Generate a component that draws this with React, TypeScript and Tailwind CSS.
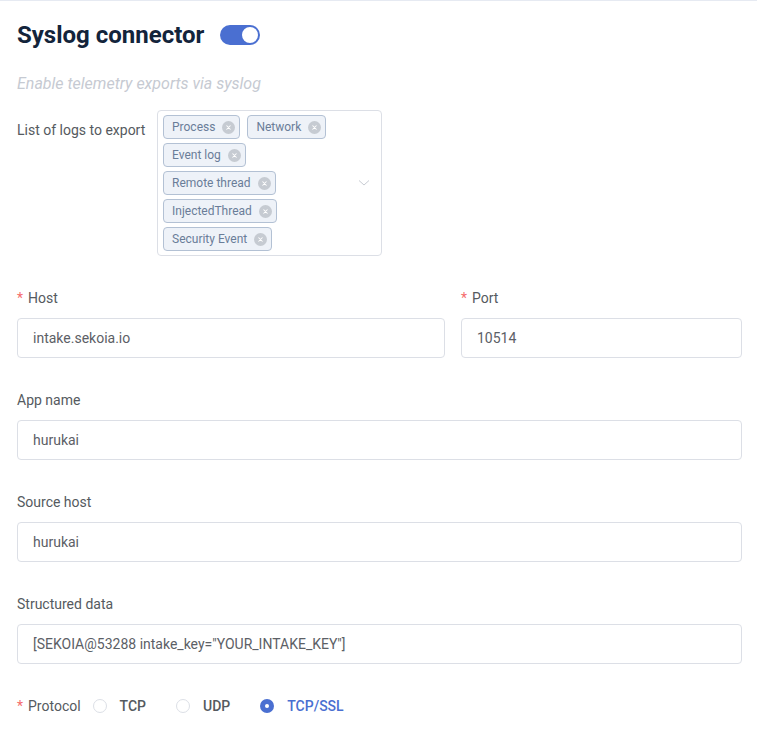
import type { ReactNode } from "react";

const TAG_ROWS = ["Process", "Network", "Event log", "Remote thread", "InjectedThread", "Security Event"];

function Required() {
  return <span className="text-[#f56c6c] mr-[5px]">*</span>;
}

function Label({ children, required }: { children: ReactNode; required?: boolean }) {
  return (
    <div className="text-[14px] leading-[20px] text-[#555a60]">
      {required && <Required />}
      {children}
    </div>
  );
}

function Input({ value }: { value: string }) {
  return (
    <div className="h-[40px] border border-[#dcdfe6] rounded-[4px] px-[15px] flex items-center text-[14px] text-[#5c6066]">
      {value}
    </div>
  );
}

function Tag({ text }: { text: string }) {
  return (
    <div className="h-[24px] pl-[8px] pr-[4px] flex items-center gap-[7px] bg-[#eef2f8] border border-[#b3c1d4] rounded-[4px] text-[12px] text-[#6a7d98]">
      <span>{text}</span>
      <span className="w-[13px] h-[13px] rounded-full bg-[#c6cbd2] flex items-center justify-center">
        <svg width="7" height="7" viewBox="0 0 8 8">
          <path d="M2 2 L6 6 M6 2 L2 6" stroke="#ffffff" strokeWidth="1.2" strokeLinecap="round" />
        </svg>
      </span>
    </div>
  );
}

function Radio({ label, checked }: { label: string; checked?: boolean }) {
  return (
    <div className="flex items-center gap-[13px]">
      {checked ? (
        <span className="w-[14px] h-[14px] rounded-full bg-[#4a6fd1] flex items-center justify-center">
          <span className="w-[4px] h-[4px] rounded-full bg-white" />
        </span>
      ) : (
        <span className="w-[14px] h-[14px] rounded-full border border-[#dcdfe6] bg-white" />
      )}
      <span className={`text-[14px] font-medium ${checked ? "text-[#4a6fd1]" : "text-[#555a60]"}`}>{label}</span>
    </div>
  );
}

export default function App() {
  return (
    <div className="min-h-screen bg-white border-t border-[#e6eaf2] font-['Roboto',sans-serif]">
      <div className="pl-[17px] pr-[15px] pt-[18px] pb-[20px]">
        {/* Header */}
        <div className="flex items-center gap-[16px] h-[32px]">
          <h1 className="text-[24px] font-bold text-[#13243b]">Syslog connector</h1>
          <div className="w-[40px] h-[20px] rounded-full bg-[#4a6fd1] flex items-center justify-end pr-[2px]">
            <span className="w-[16px] h-[16px] rounded-full bg-white" />
          </div>
        </div>

        <p className="mt-[21px] text-[16px] leading-[24px] italic text-[#c6cad2]">Enable telemetry exports via syslog</p>

        {/* Logs multiselect */}
        <div className="mt-[14px] flex items-start">
          <div className="w-[140px] pt-[10px]">
            <Label>List of logs to export</Label>
          </div>
          <div className="w-[225px] border border-[#dcdfe6] rounded-[4px] pl-[5px] py-[4px] flex items-center">
            <div className="w-[185px] flex flex-wrap gap-x-[7px] gap-y-[4px]">
              {TAG_ROWS.map((t) => (
                <Tag key={t} text={t} />
              ))}
            </div>
            <svg className="ml-[10px]" width="12" height="8" viewBox="0 0 12 8">
              <path d="M1 1.5 L6 6 L11 1.5" stroke="#c8ccd3" strokeWidth="1" fill="none" />
            </svg>
          </div>
        </div>

        {/* Host / Port */}
        <div className="mt-[32px] flex gap-[16px]">
          <div className="w-[428px] flex flex-col gap-[10px]">
            <Label required>Host</Label>
            <Input value="intake.sekoia.io" />
          </div>
          <div className="flex-1 flex flex-col gap-[10px]">
            <Label required>Port</Label>
            <Input value="10514" />
          </div>
        </div>

        <div className="mt-[32px] flex flex-col gap-[10px]">
          <Label>App name</Label>
          <Input value="hurukai" />
        </div>

        <div className="mt-[32px] flex flex-col gap-[10px]">
          <Label>Source host</Label>
          <Input value="hurukai" />
        </div>

        <div className="mt-[32px] flex flex-col gap-[10px]">
          <Label>Structured data</Label>
          <Input value={'[SEKOIA@53288 intake_key="YOUR_INTAKE_KEY"]'} />
        </div>

        {/* Protocol */}
        <div className="mt-[32px] flex items-center h-[20px]">
          <div className="mr-[12px]">
            <Label required>Protocol</Label>
          </div>
          <div className="flex items-center gap-[30px]">
            <Radio label="TCP" />
            <Radio label="UDP" />
            <Radio label="TCP/SSL" checked />
          </div>
        </div>
      </div>
    </div>
  );
}
